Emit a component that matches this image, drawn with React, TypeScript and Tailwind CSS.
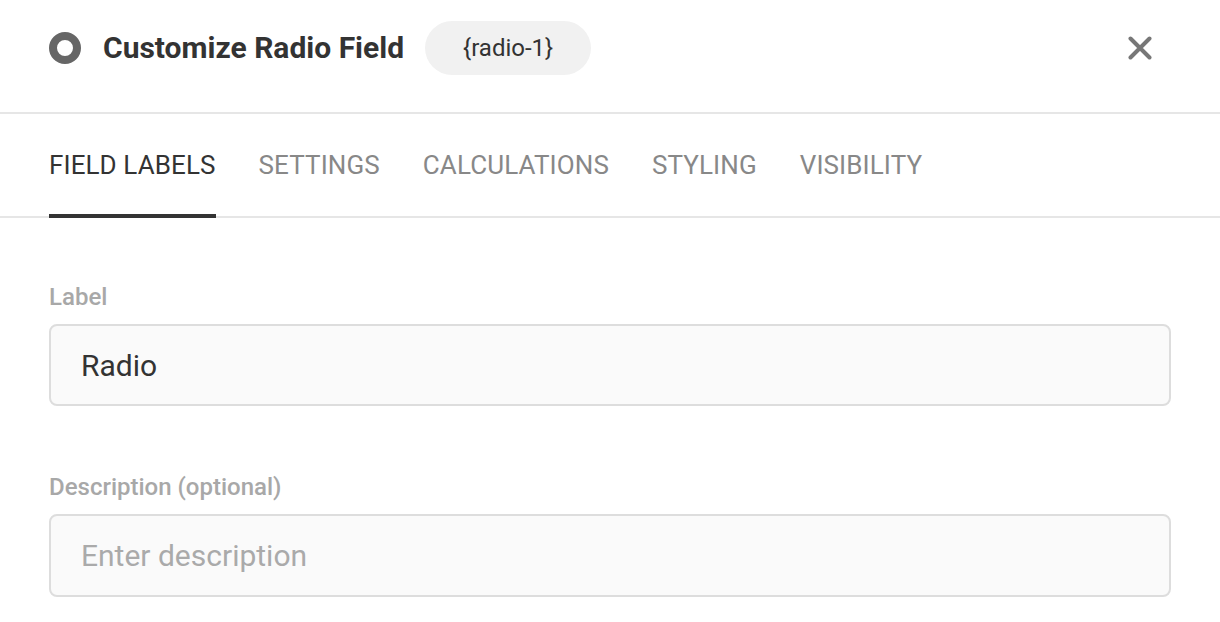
import { useState } from "react"

const tabs = ["Field Labels", "Settings", "Calculations", "Styling", "Visibility"]

function RadioIcon() {
  return (
    <svg width="32" height="32" viewBox="0 0 32 32" className="shrink-0">
      <circle cx="16" cy="16" r="12" fill="none" stroke="#666666" strokeWidth="8" />
    </svg>
  )
}

function CloseIcon() {
  return (
    <svg width="24" height="24" viewBox="0 0 24 24">
      <path d="M2.5 2.5 L21.5 21.5 M21.5 2.5 L2.5 21.5" stroke="#777777" strokeWidth="4" strokeLinecap="round" />
    </svg>
  )
}

export default function App() {
  const [active, setActive] = useState(0)
  const [label, setLabel] = useState("Radio")
  const [description, setDescription] = useState("")

  return (
    <div className="w-full min-h-[622px] bg-white text-[#333333] font-['Roboto','Liberation_Sans',sans-serif]">
      {/* Header */}
      <div className="flex items-center pt-[21px] pb-[37px] px-[49px] border-b-2 border-[#e6e6e6]">
        <RadioIcon />
        <h1 className="ml-[22px] text-[30px] leading-[36px] font-bold text-[#333333]">
          Customize Radio Field
        </h1>
        <span className="ml-[21px] h-[54px] px-[38px] flex items-center rounded-full bg-[#f1f1f1] text-[24px] text-[#333333]">
          {"{radio-1}"}
        </span>
        <button className="ml-auto mr-[7px] w-[48px] h-[48px] flex items-center justify-center" aria-label="Close">
          <CloseIcon />
        </button>
      </div>

      {/* Tabs */}
      <div className="flex gap-[43px] px-[49px] border-b-2 border-[#e6e6e6]">
        {tabs.map((tab, i) => (
          <button
            key={tab}
            onClick={() => setActive(i)}
            className={
              i === active
                ? "pt-[36px] pb-[34px] -mb-[2px] border-b-4 border-[#333333] text-[26px] leading-[30px] tracking-[0.1px] uppercase text-[#333333]"
                : "pt-[36px] pb-[36px] text-[26px] leading-[30px] tracking-[0.1px] uppercase text-[#888888]"
            }
          >
            {tab}
          </button>
        ))}
      </div>

      {/* Body */}
      <div className="px-[49px] pt-[65px]">
        <label className="block text-[24px] leading-[28px] font-medium text-[#a8a8a8]">Label</label>
        <input
          value={label}
          onChange={(e) => setLabel(e.target.value)}
          className="mt-[13px] w-full h-[82px] px-[30px] rounded-[8px] border-2 border-[#dddddd] bg-[#fafafa] text-[30px] text-[#333333] outline-none"
        />

        <label className="mt-[67px] block text-[24px] leading-[28px] font-medium text-[#a8a8a8]">
          Description (optional)
        </label>
        <input
          value={description}
          onChange={(e) => setDescription(e.target.value)}
          placeholder="Enter description"
          className="mt-[13px] w-full h-[83px] px-[30px] rounded-[8px] border-2 border-[#dddddd] bg-[#fafafa] text-[30px] text-[#333333] placeholder:text-[#aaaaaa] outline-none"
        />
      </div>
    </div>
  )
}
